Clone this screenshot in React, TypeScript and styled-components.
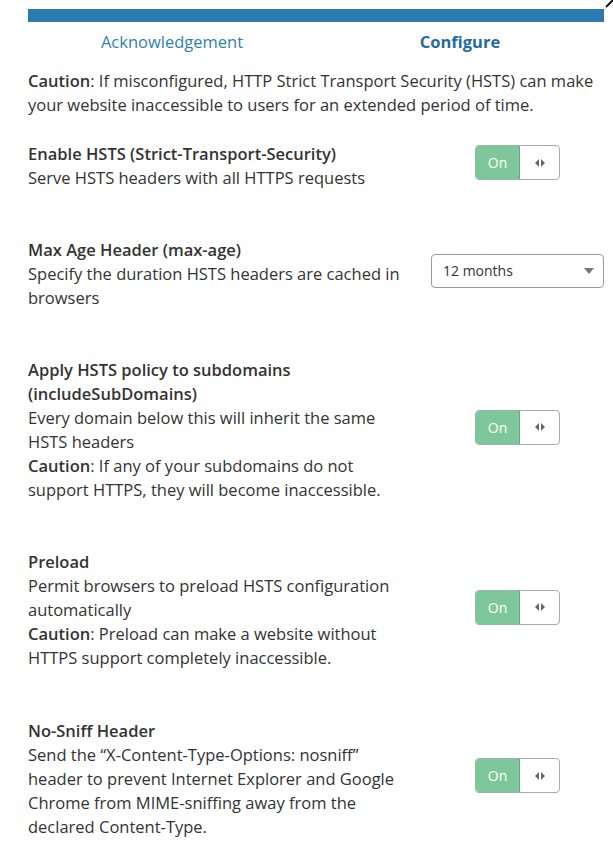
import React, { useState } from 'react';
import styled, { createGlobalStyle } from 'styled-components';

const GlobalStyle = createGlobalStyle`
  html, body {
    margin: 0;
    padding: 0;
    background: #fff;
  }
  body {
    font-family: "Open Sans", "Noto Sans", sans-serif;
    font-size: 16.5px;
    color: #333;
  }
`;

const Wrapper = styled.div`
  position: relative;
  width: 613px;
  padding: 9px 9px 0 28px;
  box-sizing: border-box;
`;
const CloseMark = styled.svg`
  position: absolute;
  top: 0;
  right: 0;
`;
const ProgressBar = styled.div`
  height: 13px;
  width: 576px;
  background: #2b7bb0;
`;
const Tabs = styled.div`
  display: grid;
  grid-template-columns: 1fr 1fr;
  width: 576px;
  height: 40px;
  align-items: center;
`;
const Tab = styled.div<{ $active?: boolean }>`
  text-align: center;
  color: ${ p => p.$active ? '#236a9e' : '#2f7fb5' };
  font-weight: ${ p => p.$active ? 700 : 400 };
  padding-bottom: 2px;
`;
const Intro = styled.p`
  margin: 7px 0 0;
  line-height: 24px;
  width: 576px;

  b {
    font-weight: 600;
  }
`;
const Setting = styled.div`
  display: grid;
  grid-template-columns: 384px 173px;
  column-gap: 19px;
  align-items: center;
  padding: 24.5px 0 23.8px;
`;
const Text = styled.div`
  line-height: 24px;

  b {
    font-weight: 600;
  }
`;
const Title = styled.div`
  font-weight: 600;
`;
const Control = styled.div`
  display: flex;
  justify-content: center;
  padding-bottom: 6px;
`;
const Switch = styled.button`
  display: flex;
  width: 85px;
  height: 35px;
  padding: 0;
  border: 1px solid #9fb3a6;
  border-radius: 4px;
  overflow: hidden;
  background: #fff;
  cursor: pointer;
  font-family: inherit;
`;
const SwitchLabel = styled.span`
  width: 43px;
  background: #7dc79a;
  color: #fff;
  font-size: 14px;
  display: flex;
  align-items: center;
  justify-content: center;
  border-right: 1px solid #66a882;
`;
const SwitchHandle = styled.span`
  flex: 1;
  display: flex;
  align-items: center;
  justify-content: center;
  color: #666;
`;
const Select = styled.div`
  width: 173px;
  height: 34px;
  box-sizing: border-box;
  border: 1px solid #9a9a9a;
  border-radius: 4px;
  display: flex;
  align-items: center;
  justify-content: space-between;
  padding: 0 9px 0 11px;
  font-size: 14px;
  color: #333;
`;

type Item = {
  title: string;
  lines: React.ReactNode;
  control: 'switch' | 'select';
};

const items: Item[] = [
  {
    title: 'Enable HSTS (Strict-Transport-Security)',
    lines: <>Serve HSTS headers with all HTTPS requests</>,
    control: 'switch'
  },
  {
    title: 'Max Age Header (max-age)',
    lines: <>Specify the duration HSTS headers are cached in browsers</>,
    control: 'select'
  },
  {
    title: 'Apply HSTS policy to subdomains (includeSubDomains)',
    lines: <>
      Every domain below this will inherit the same HSTS headers<br />
      <b>Caution</b>: If any of your subdomains do not support HTTPS, they will become inaccessible.
    </>,
    control: 'switch'
  },
  {
    title: 'Preload',
    lines: <>
      Permit browsers to preload HSTS configuration automatically<br />
      <b>Caution</b>: Preload can make a website without HTTPS support completely inaccessible.
    </>,
    control: 'switch'
  },
  {
    title: 'No-Sniff Header',
    lines: <>Send the “X-Content-Type-Options: nosniff” header to prevent Internet Explorer and Google Chrome from MIME-sniffing away from the declared Content-Type.</>,
    control: 'switch'
  }
];

function Toggle() {
  const [ on, setOn ] = useState(true);

  return (
    <Switch onClick={ () => setOn(!on) }>
      <SwitchLabel>{ on ? 'On' : 'Off' }</SwitchLabel>
      <SwitchHandle>
        <svg width="10" height="8" viewBox="0 0 10 8">
          <path d="M4 0 L0 4 L4 8 Z M6 0 L10 4 L6 8 Z" fill="#666" />
        </svg>
      </SwitchHandle>
    </Switch>
  );
}

export default function App() {
  return (
    <Wrapper>
      <GlobalStyle />
      <CloseMark width="8" height="8" viewBox="0 0 8 8">
        <path d="M1 7 L8 0" stroke="#111" strokeWidth="2" />
      </CloseMark>
      <ProgressBar />
      <Tabs>
        <Tab>Acknowledgement</Tab>
        <Tab $active>Configure</Tab>
      </Tabs>
      <Intro>
        <b>Caution</b>: If misconfigured, HTTP Strict Transport Security (HSTS) can make your website inaccessible to users for an extended period of time.
      </Intro>
      {
        items.map((item, i) =>
          <Setting key={ i }>
            <Text>
              <Title>{ item.title }</Title>
              { item.lines }
            </Text>
            <Control>
              {
                item.control === 'switch'
                  ? <Toggle />
                  : <Select>
                      12 months
                      <svg width="10" height="6" viewBox="0 0 10 6">
                        <path d="M0 0 L10 0 L5 6 Z" fill="#777" />
                      </svg>
                    </Select>
              }
            </Control>
          </Setting>
        )
      }
    </Wrapper>
  );
}
